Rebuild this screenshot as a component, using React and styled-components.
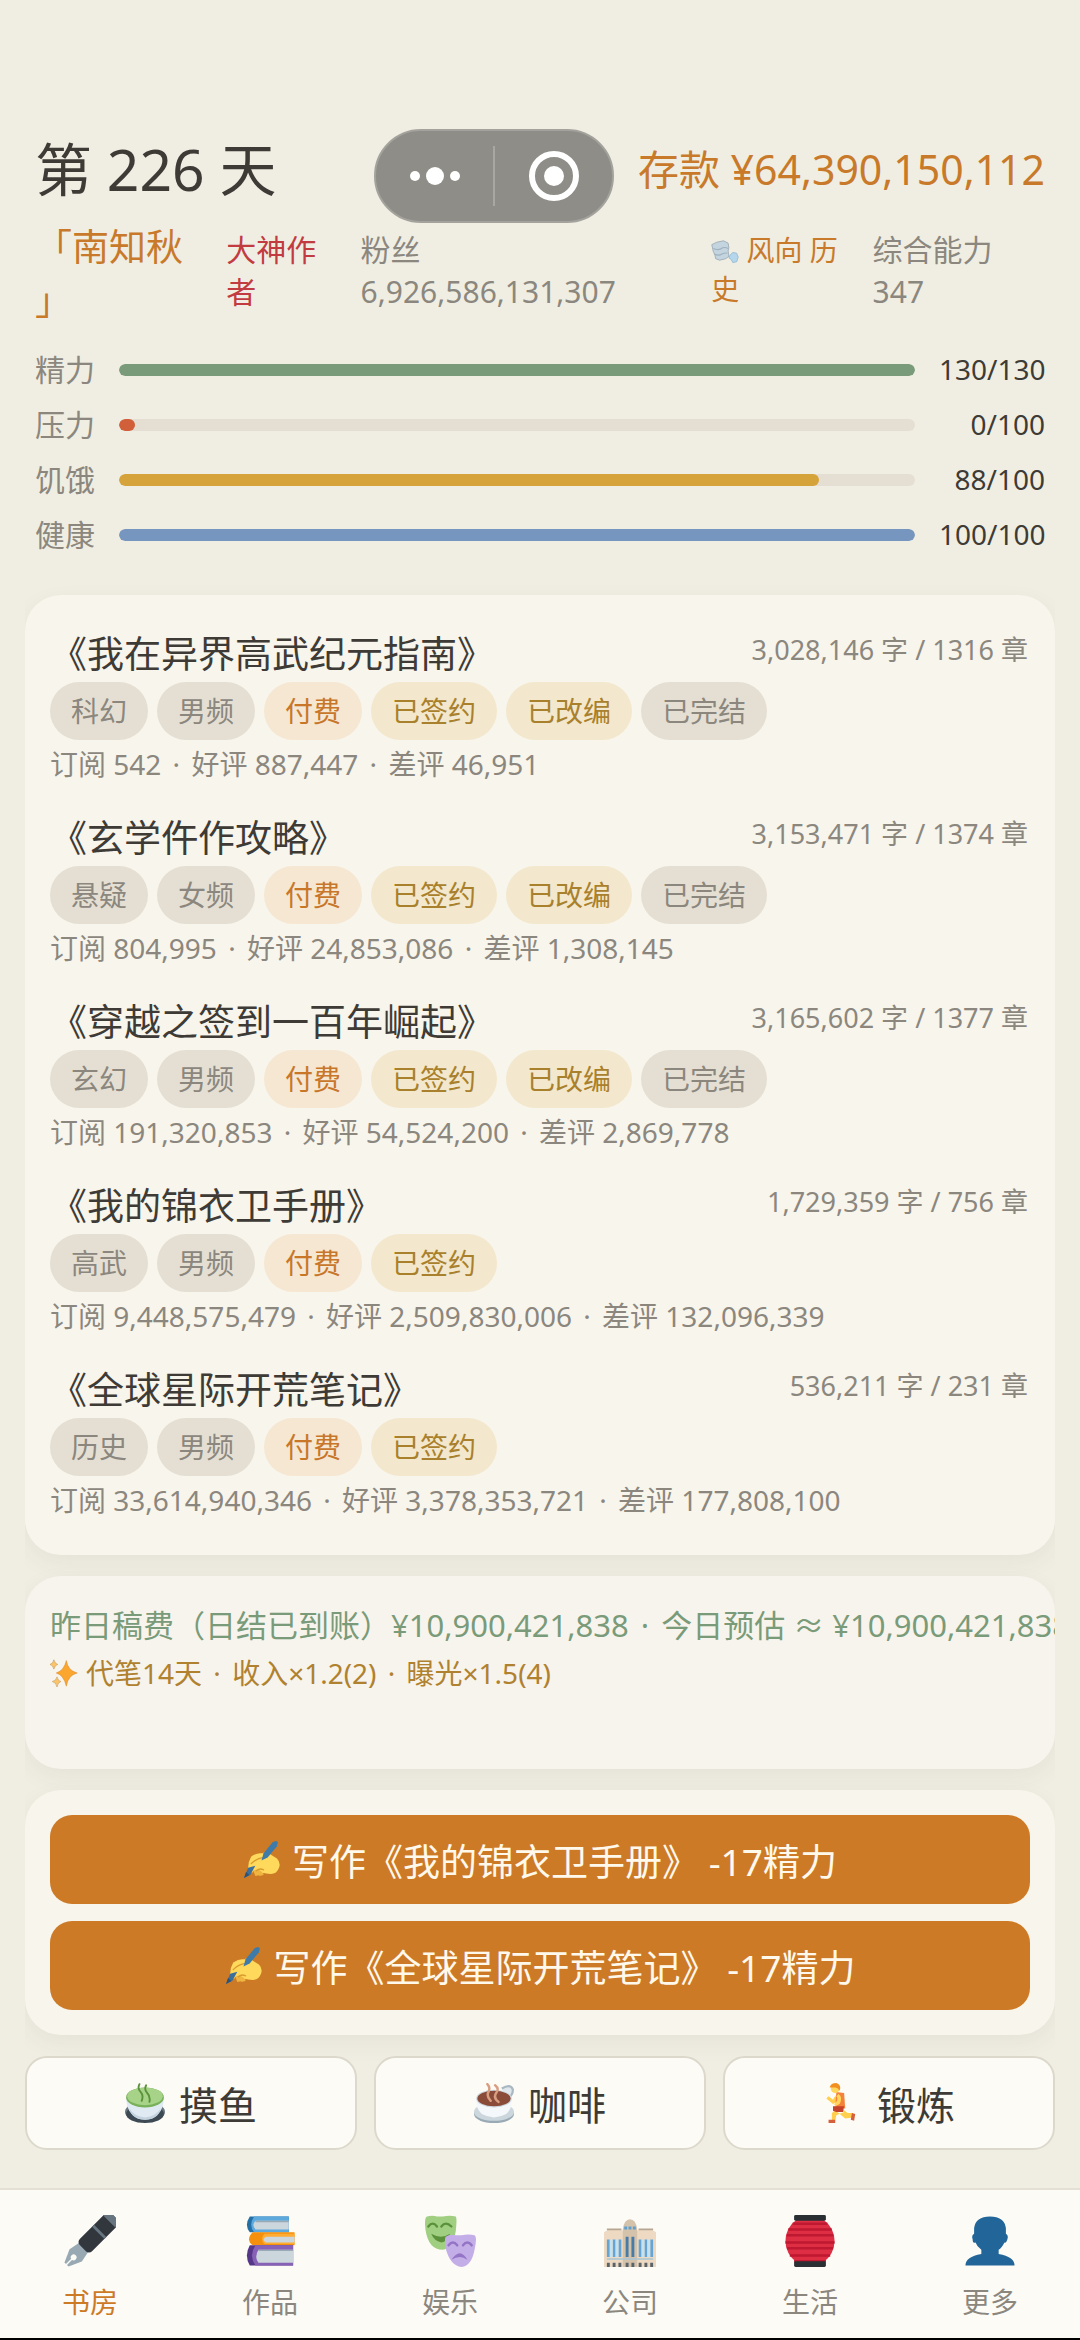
import React from 'react';
import styled, { createGlobalStyle } from 'styled-components';

const GlobalStyle = createGlobalStyle`
  * {
    box-sizing: border-box;
  }
  body {
    margin: 0;
    background: #f0eee3;
    color: #3e3b36;
    font-family: 'Noto Sans', 'Noto Sans CJK SC', sans-serif;
    text-spacing-trim: space-all;
  }
  h1, h2, p, ul, dl, dt, dd {
    margin: 0;
    padding: 0;
    font-weight: 400;
  }
  button {
    font-family: inherit;
    cursor: pointer;
  }
`;

const Page = styled('div')({
  position: 'relative',
  display: 'flex',
  flexDirection: 'column',
  minHeight: '100vh',
});

const Capsule = styled('div')({
  position: 'absolute',
  top: 129,
  left: 374,
  display: 'flex',
  alignItems: 'center',
  width: 240,
  height: 94,
  border: '2px solid #a3a29c',
  borderRadius: 47,
  background: '#8e8d87',
});

const CapsuleButton = styled('button')({
  display: 'flex',
  flex: 1,
  justifyContent: 'center',
  alignItems: 'center',
  height: 60,
  padding: 0,
  border: 0,
  background: 'none',
  '& + &': {
    borderLeft: '2px solid #a8a7a1',
  },
});

const Header = styled('header')({
  padding: '129px 35px 0',
});

const TopRow = styled('div')({
  display: 'flex',
  justifyContent: 'space-between',
  alignItems: 'center',
});

const Day = styled('h1')({
  fontSize: 57,
  lineHeight: '80px',
});

const Money = styled('p')({
  color: '#c87a2a',
  fontSize: 41,
  lineHeight: '80px',
});

const Meta = styled('div')({
  display: 'grid',
  gridTemplateColumns: '167fr 110fr 326fr 137fr 172fr',
  columnGap: 24,
  alignItems: 'baseline',
  marginTop: 11,
});

const MetaItem = styled('p')`
  color: ${(props) => props.$color || '#8b877e'};
  font-size: ${(props) => props.$size || 30}px;
  line-height: ${(props) => props.$line || 42}px;
  line-break: anywhere;
`;

const Stats = styled('dl')({
  display: 'grid',
  rowGap: 12,
  marginTop: 20,
});

const StatRow = styled('div')({
  display: 'grid',
  gridTemplateColumns: '60px 1fr 106px',
  columnGap: 24,
  alignItems: 'center',
  fontSize: 30,
  lineHeight: '43px',
  '& dt': {
    color: '#8b877e',
  },
  '& dd:last-child': {
    fontSize: 28,
    textAlign: 'right',
  },
});

const Track = styled('dd')({
  height: 12,
  borderRadius: 6,
  background: '#e5dfd3',
  overflow: 'hidden',
});

const Fill = styled('div')`
  min-width: 16px;
  height: 100%;
  border-radius: 6px;
  background: ${(props) => props.$color};
`;

const Main = styled('main')({
  display: 'flex',
  flexDirection: 'column',
  gap: 21,
  margin: '39px 25px 36px',
  overflowX: 'clip',
});

const Card = styled('section')`
  padding: ${(props) => props.$pad || '25px'};
  border-radius: 36px;
  background: ${(props) => props.$bg || '#f8f5ec'};
  box-shadow: 0 8px 24px rgba(70, 60, 30, 0.06);
`;

const BookList = styled('ul')({
  display: 'grid',
  rowGap: 22,
  listStyle: 'none',
});

const BookHead = styled('div')({
  display: 'flex',
  justifyContent: 'space-between',
  alignItems: 'flex-start',
});

const BookTitle = styled('h2')({
  fontSize: 37,
  lineHeight: '56px',
});

const BookText = styled('p')({
  color: '#8b877e',
  fontSize: 28,
  lineHeight: '48px',
});

const WordCount = styled(BookText)({
  fontSize: 27,
});

const Dot = styled('span')({
  margin: '0 4px',
});

const Tags = styled('div')({
  display: 'flex',
  gap: 9,
});

const tagColors = {
  plain: ['#e5dfd3', '#8b877e'],
  pay: ['#f5e7d2', '#c8762a'],
  gold: ['#f3e8cd', '#a9802c'],
};

const Tag = styled('span')`
  padding: 0 21px;
  border-radius: 29px;
  background: ${(props) => tagColors[props.$kind][0]};
  color: ${(props) => tagColors[props.$kind][1]};
  font-size: 28px;
  line-height: 58px;
`;

const IncomeCard = styled(Card)({
  minHeight: 193,
  overflow: 'hidden',
  whiteSpace: 'nowrap',
});

const Income = styled('p')({
  color: '#7a9b79',
  fontSize: 31,
  lineHeight: '48px',
});

const Buffs = styled('p')({
  display: 'flex',
  alignItems: 'center',
  gap: 8,
  color: '#b0812f',
  fontSize: 28,
  lineHeight: '48px',
});

const WriteCard = styled(Card)({
  display: 'grid',
  rowGap: 17,
});

const WriteButton = styled('button')({
  display: 'flex',
  justifyContent: 'center',
  alignItems: 'center',
  gap: 12,
  height: 89,
  border: 0,
  borderRadius: 22,
  background: '#cd7a26',
  color: '#fff9ec',
  fontSize: 37,
});

const Actions = styled('div')({
  display: 'grid',
  gridTemplateColumns: 'repeat(3, 1fr)',
  columnGap: 17,
});

const ActionButton = styled('button')({
  display: 'flex',
  justifyContent: 'center',
  alignItems: 'center',
  gap: 14,
  height: 94,
  border: '2px solid #dcd8cb',
  borderRadius: 22,
  background: '#fcfbf6',
  color: '#3e3b36',
  fontSize: 39,
});

const Nav = styled('nav')({
  display: 'grid',
  gridTemplateColumns: 'repeat(6, 1fr)',
  marginTop: 'auto',
  borderTop: '2px solid #e4e0d5',
  borderBottom: '2px solid #000000',
  background: '#fcfbf6',
});

const NavLink = styled('a')`
  display: flex;
  flex-direction: column;
  align-items: center;
  gap: 15px;
  padding: 25px 0 16px;
  color: ${(props) => (props.$active ? '#cd7a26' : '#8b877e')};
  font-size: 28px;
  line-height: 40px;
  text-decoration: none;
`;

const InlineIcon = styled('span')({
  display: 'inline-block',
  verticalAlign: 'middle',
  lineHeight: 0,
});

const Svg = ({ size, children }) => (
  <svg width={size} height={size} viewBox="0 0 36 36" aria-hidden="true">
    {children}
  </svg>
);

const WindIcon = () => (
  <Svg size={28}>
    <path
      d="M1 6l6-3 9-2 6 3 1 6-1 4 1 7-4 3-8 2-5-2-1-5-2-4z"
      fill="#c5d5e0"
      stroke="#93a5b0"
      strokeLinejoin="round"
    />
    <path d="M3 11q7 3 12-1 4-1 7 1M4 18q6 3 10 0 4-2 7-1" fill="none" stroke="#9fb2be" strokeWidth="1.5" />
    <path d="M24 20l4-4 5 1 2 5-2 6-5 1-2-4-3-2z" fill="#b5d7ee" stroke="#8fb4cc" strokeLinejoin="round" />
  </Svg>
);

const SparkleIcon = () => (
  <Svg size={28}>
    <path d="M21 2q2 13 14 16-12 3-14 17-3-14-13-17 10-3 13-16z" fill="#fba62f" stroke="#d4872a" strokeWidth=".6" />
    <path d="M5 1q1 5 5 6-4 1-5 6-1-5-5-6 4-1 5-6z" fill="#fbc46a" stroke="#b98338" strokeWidth=".6" />
    <path d="M9 23q1 5 5 6-4 1-5 7-1-6-6-7 5-1 6-6z" fill="#fbc46a" stroke="#b98338" strokeWidth=".6" />
  </Svg>
);

const WritingIcon = () => (
  <Svg size={37}>
    <path d="M12 34l-2-5 3-3 4 7zM16 34l-2-6 5-2 1 7z" fill="#f0b440" />
    <path d="M8 15q6-4 11-3 3-2 6 0l8 5q4 4 2 9-2 6-8 6-5 0-8-1-2-3-6-3-3 0-4 3-4-1-4-5 0-6 3-11z" fill="#ffd95c" />
    <path d="M8 22q5-5 12-6 3 0 3-3M13 29q3-3 7-1" fill="none" stroke="#d99b2e" strokeWidth="1.3" strokeLinecap="round" />
    <path d="M29 1l3-1 2 1-1 4-9 11-6 3 2-7z" fill="#3f7ba8" />
    <path d="M5 26l7-2-5 9-6 3z" fill="#3c6f9c" />
    <path d="M1 36l2-6 3 3z" fill="#2d5274" />
  </Svg>
);

const TeaIcon = () => (
  <Svg size={40}>
    <ellipse cx="18" cy="26" rx="18" ry="9" fill="#66757f" />
    <ellipse cx="18" cy="28" rx="17" ry="8" fill="#3d4a54" />
    <path d="M1 13h34q0 9-5 15-4 5-12 5T6 28Q1 22 1 13z" fill="#dfeaf3" />
    <path d="M4 23q4 7 14 8 10-1 14-8-2 10-14 10T4 23z" fill="#c2d2df" />
    <ellipse cx="18" cy="13" rx="17" ry="9" fill="#78b159" />
    <ellipse cx="18" cy="12" rx="16" ry="8" fill="#a6d388" />
    <path d="M13 1q-2 4 1 7t1 8M19 2q-2 4 1 7t2 8" fill="none" stroke="#5c913b" strokeWidth="1.7" strokeLinecap="round" />
  </Svg>
);

const CoffeeIcon = () => (
  <Svg size={40}>
    <ellipse cx="18" cy="28" rx="18" ry="8" fill="#99aab5" />
    <ellipse cx="18" cy="26" rx="18" ry="8" fill="#ccd6dd" />
    <path d="M25 5q8-5 10 1 0 6-7 9" fill="#dfe7ec" stroke="#a9b8c3" strokeWidth="2" />
    <path d="M2 14q-1 8 5 14 11 6 22 0 6-6 5-14z" fill="#f5f8fa" />
    <ellipse cx="18" cy="14" rx="16" ry="8" fill="#ccd6dd" />
    <ellipse cx="18" cy="14" rx="15" ry="7" fill="#8a4b38" />
    <path d="M12 1q3 3 1 7t2 8M19 2q4 3 1 7t2 8" fill="none" stroke="#d99e82" strokeWidth="2.2" strokeLinecap="round" />
  </Svg>
);

const RunnerIcon = () => (
  <Svg size={40}>
    <path d="M15 9q-5 3-6 6l-4-3-2 2 6 5 6-4zM13 23l-5 4 0 7 3 0 1-5 7-3zM17 23l5 4 5 0 0 4-7 1-7-6z" fill="#ffcf4d" />
    <path d="M12 8l7 1 1 14-9-1z" fill="#f4823a" />
    <path d="M9 21h10l-1 5-6 0-3-1z" fill="#c5422b" />
    <path d="M14 10q4 3 1 9l-4 2-1-2 2-2q2-3 0-5z" fill="#ffd75e" />
    <circle cx="11" cy="5" r="4" fill="#ffd75e" />
    <path d="M6 4q1-4 6-4 5 2 3 7-2-3-4-3z" fill="#f19020" />
    <path d="M5 33h6v3H5zM26 27l3 1-1 6-3-1z" fill="#d6603c" />
  </Svg>
);

const PenIcon = () => (
  <Svg size={52}>
    <g transform="rotate(45 18 18)">
      <path d="M14 22h8l2 10-4 9h-4l-4-9z" fill="#99a9b3" />
      <rect x="12" y="-6" width="12" height="31" rx="3" fill="#31373d" />
      <path d="M12-1v-2q0-3 3-3h6q3 0 3 3v2z" fill="#66757f" />
      <path d="M12 8h12v2H12z" fill="#66757f" />
      <circle cx="18" cy="34" r="2" fill="#fcfbf6" />
      <path d="M17.500 34h1v8h-1z" fill="#fcfbf6" />
    </g>
  </Svg>
);

const BooksIcon = () => (
  <Svg size={52}>
    <path d="M4 1h27v11H4q-4-5 0-11z" fill="#2470a6" />
    <path d="M7 1h24v11H7q-4-5 0-11z" fill="#5da9dd" />
    <path d="M8 4h23v6H8q-3-3 0-6z" fill="#ccd6dd" />
    <path d="M6 12h29v9H6q-5-4 0-9z" fill="#f4900c" />
    <path d="M14 13h21v7H14q-3-3 0-7z" fill="#ffac33" />
    <path d="M15 15h20v4H15q-3-2 0-4z" fill="#ccd6dd" />
    <path d="M4 21h30v14H4q-4-7 0-14z" fill="#553788" />
    <path d="M8 21h26v14H8q-5-7 0-14z" fill="#8661b5" />
    <path d="M10 24h24v9H10q-3-4 0-9z" fill="#ccd6dd" />
    <path d="M10 24h24v1H10zM8 4h23v1H8z" fill="#99aab5" />
  </Svg>
);

const MasksIcon = () => (
  <Svg size={52}>
    <path d="M2 1q4-1 7 0h4q5-1 9 0 1 1 0 10-2 12-9 13Q3 24 1 10 0 2 2 1z" fill="#a0cf82" />
    <path d="M3 8q3-4 6 0M12 8q3-4 7 0" fill="none" stroke="#5c913b" strokeWidth="1.6" strokeLinecap="round" />
    <path d="M5 13q7 4 13 0-2 6-6 6-5-1-7-6z" fill="#5c913b" />
    <path d="M15 15q3-2 7-1h4q5-1 9 0 2 1 0 10-2 11-9 12-8-1-11-13-1-7 0-8z" fill="#c4aee8" />
    <path d="M17 21q3-4 6 0M27 21q3-4 6 0" fill="none" stroke="#9474c4" strokeWidth="1.7" strokeLinecap="round" />
    <path d="M19 31q6-9 11 0-5-4-11 0z" fill="#9474c4" />
  </Svg>
);

const OfficeIcon = () => (
  <Svg size={52}>
    <path d="M0 12l3-2h9l2 2h8l2-2h9l3 2v24H0z" fill="#eedac3" />
    <path d="M2 10h10M24 10h10" stroke="#b7a792" strokeWidth="1.2" />
    <path d="M13 36V10q1-7 5-7t5 7v26z" fill="#d4c2ab" />
    <path d="M14 8h2v2h-2zM17 8h2v2h-2zM20 8h2v2h-2z" fill="#5d9fce" />
    <path d="M2 17h2v12H2zM6 17h2v12H6zM10 17h2v12h-2zM24 17h2v12h-2zM28 17h2v12h-2zM32 17h2v12h-2z" fill="#66a4d4" />
    <path d="M4 17h2v12H4zM8 17h2v12H8zM26 17h2v12h-2zM30 17h2v12h-2z" fill="#c6e2ef" />
    <path d="M15 15h2v14h-2zM19 15h2v14h-2z" fill="#487ba6" />
    <path d="M2 30h32v1H2z" fill="#a8c6d4" />
    <path d="M2 33h2v3H2zM6 33h2v3H6zM10 33h2v3h-2zM15 33h2v3h-2zM19 33h2v3h-2zM24 33h2v3h-2zM28 33h2v3h-2zM32 33h2v3h-2z" fill="#58636a" />
  </Svg>
);

const LanternIcon = () => (
  <Svg size={52}>
    <path d="M9 3h18q8 6 8 15t-8 15H9q-8-6-8-15T9 3z" fill="#dd2e44" />
    <path d="M6 6h24M3 10h30M2 14h32M1 19h34M2 23h32M4 28h28M7 32h22" stroke="#be1931" strokeWidth="1.7" />
    <rect x="7" width="22" height="4" rx="1" fill="#292f33" />
    <rect x="7" y="32" width="22" height="4" rx="1" fill="#292f33" />
  </Svg>
);

const PersonIcon = () => (
  <Svg size={52}>
    <path
      d="M18 1q10 0 11 8v4q2 1 1 4t-2 2q-2 4-4 5v3q11 2 11 8H1q0-6 11-8v-3q-3-2-4-5-2 1-2-2-1-3 1-4V9q1-8 11-8z"
      fill="#226699"
    />
  </Svg>
);

const stats = [
  { label: '精力', value: 130, max: 130, color: '#7a9b79' },
  { label: '压力', value: 0, max: 100, color: '#d15f3a' },
  { label: '饥饿', value: 88, max: 100, color: '#d6a33a' },
  { label: '健康', value: 100, max: 100, color: '#7696bf' },
];

const books = [
  {
    title: '《我在异界高武纪元指南》',
    words: '3,028,146 字 / 1316 章',
    tags: ['科幻', '男频', '付费', '已签约', '已改编', '已完结'],
    reviews: ['订阅 542', '好评 887,447', '差评 46,951'],
  },
  {
    title: '《玄学仵作攻略》',
    words: '3,153,471 字 / 1374 章',
    tags: ['悬疑', '女频', '付费', '已签约', '已改编', '已完结'],
    reviews: ['订阅 804,995', '好评 24,853,086', '差评 1,308,145'],
  },
  {
    title: '《穿越之签到一百年崛起》',
    words: '3,165,602 字 / 1377 章',
    tags: ['玄幻', '男频', '付费', '已签约', '已改编', '已完结'],
    reviews: ['订阅 191,320,853', '好评 54,524,200', '差评 2,869,778'],
  },
  {
    title: '《我的锦衣卫手册》',
    words: '1,729,359 字 / 756 章',
    tags: ['高武', '男频', '付费', '已签约'],
    reviews: ['订阅 9,448,575,479', '好评 2,509,830,006', '差评 132,096,339'],
  },
  {
    title: '《全球星际开荒笔记》',
    words: '536,211 字 / 231 章',
    tags: ['历史', '男频', '付费', '已签约'],
    reviews: ['订阅 33,614,940,346', '好评 3,378,353,721', '差评 177,808,100'],
  },
];

const income = ['昨日稿费（日结已到账）¥10,900,421,838', '今日预估 ≈ ¥10,900,421,838'];

const buffs = ['代笔14天', '收入×1.2(2)', '曝光×1.5(4)'];

const tagKinds = { 付费: 'pay', 已签约: 'gold', 已改编: 'gold' };

const writings = ['《我的锦衣卫手册》', '《全球星际开荒笔记》'];

const actions = [
  { label: '摸鱼', Icon: TeaIcon },
  { label: '咖啡', Icon: CoffeeIcon },
  { label: '锻炼', Icon: RunnerIcon },
];

const tabs = [
  { label: '书房', Icon: PenIcon, active: true },
  { label: '作品', Icon: BooksIcon },
  { label: '娱乐', Icon: MasksIcon },
  { label: '公司', Icon: OfficeIcon },
  { label: '生活', Icon: LanternIcon },
  { label: '更多', Icon: PersonIcon },
];

const DotList = ({ items }) => (
  <span>
    {items.map((item, index) => (
      <React.Fragment key={item}>
        {index > 0 && <Dot> · </Dot>}
        {item}
      </React.Fragment>
    ))}
  </span>
);

const BookItem = ({ book }) => (
  <li>
    <BookHead>
      <BookTitle>{book.title}</BookTitle>
      <WordCount>{book.words}</WordCount>
    </BookHead>
    <Tags>
      {book.tags.map((tag) => (
        <Tag key={tag} $kind={tagKinds[tag] || 'plain'}>
          {tag}
        </Tag>
      ))}
    </Tags>
    <BookText>
      <DotList items={book.reviews} />
    </BookText>
  </li>
);

const App = () => (
  <>
    <GlobalStyle />
    <Page>
      <Header>
        <TopRow>
          <Day>第 226 天</Day>
          <Money>存款 ¥64,390,150,112</Money>
        </TopRow>
        <Meta>
          <MetaItem $color="#c87a2a" $size={37} $line={54}>
            「南知秋」
          </MetaItem>
          <MetaItem $color="#c23b40">大神作者</MetaItem>
          <MetaItem>
            粉丝
            <br />
            6,926,586,131,307
          </MetaItem>
          <MetaItem $color="#c87a2a" $size={28} $line={39}>
            <InlineIcon>
              <WindIcon />
            </InlineIcon>{' '}
            风向 历史
          </MetaItem>
          <MetaItem>
            综合能力
            <br />
            347
          </MetaItem>
        </Meta>
        <Stats>
          {stats.map(({ label, value, max, color }) => (
            <StatRow key={label}>
              <dt>{label}</dt>
              <Track>
                <Fill $color={color} style={{ width: `${(value / max) * 100}%` }} />
              </Track>
              <dd>
                {value}/{max}
              </dd>
            </StatRow>
          ))}
        </Stats>
      </Header>

      <Capsule>
        <CapsuleButton aria-label="菜单">
          <svg width="52" height="20" viewBox="0 0 52 20" fill="#ffffff">
            <circle cx="6" cy="10" r="5" />
            <circle cx="26" cy="10" r="9" />
            <circle cx="46" cy="10" r="5" />
          </svg>
        </CapsuleButton>
        <CapsuleButton aria-label="关闭">
          <svg width="52" height="52" viewBox="0 0 52 52">
            <circle cx="26" cy="26" r="22" fill="none" stroke="#ffffff" strokeWidth="6" />
            <circle cx="26" cy="26" r="10" fill="#ffffff" />
          </svg>
        </CapsuleButton>
      </Capsule>

      <Main>
        <Card $pad="31px 27px 31px 25px">
          <BookList>
            {books.map((book) => (
              <BookItem key={book.title} book={book} />
            ))}
          </BookList>
        </Card>
        <IncomeCard $bg="#f7f4ed">
          <Income>
            <DotList items={income} />
          </Income>
          <Buffs>
            <SparkleIcon />
            <DotList items={buffs} />
          </Buffs>
        </IncomeCard>
        <WriteCard>
          {writings.map((title) => (
            <WriteButton key={title}>
              <WritingIcon />
              写作{title} -17精力
            </WriteButton>
          ))}
        </WriteCard>
        <Actions>
          {actions.map(({ label, Icon }) => (
            <ActionButton key={label}>
              <Icon />
              {label}
            </ActionButton>
          ))}
        </Actions>
      </Main>

      <Nav>
        {tabs.map(({ label, Icon, active }) => (
          <NavLink key={label} href="#" $active={active}>
            <Icon />
            {label}
          </NavLink>
        ))}
      </Nav>
    </Page>
  </>
);

export default App;
